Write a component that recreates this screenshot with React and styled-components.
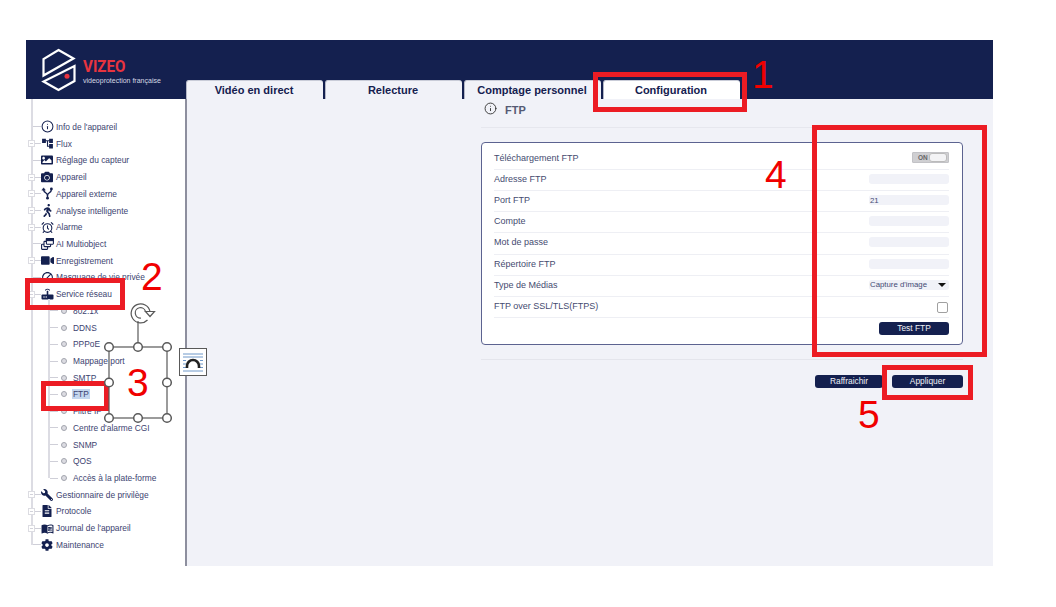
import React from "react";
import styled, { createGlobalStyle } from "styled-components";
import { Info, AlarmClock } from "lucide-react";
import { FaCamera, FaImage, FaWalking, FaVideo, FaWrench, FaFileAlt, FaCog } from "react-icons/fa";
import { MdAccountTree, MdMenuBook, MdOutlineBlock } from "react-icons/md";

const Global = createGlobalStyle`
  html, body { margin: 0; padding: 0; background: #fff; }
  body { font-family: "Liberation Sans", Arial, sans-serif; width: 1056px; height: 607px; overflow: hidden; }
  * { box-sizing: border-box; }
`;

const NAVY = "#14204f";
const ROW = 16.72;

const Page = styled.div`position: relative; width: 1056px; height: 607px; padding: 40px 63px 41px 26px;`;
const Frame = styled.div`width: 967px; height: 526px; display: flex; flex-direction: column;`;
const Header = styled.header`height: 59px; background: ${NAVY}; display: flex; align-items: flex-end; flex: none;`;
const Brand = styled.div`width: 160px; height: 59px; flex: none; display: flex; align-items: flex-start; padding: 8px 0 0 14px; gap: 5px;`;
const BrandText = styled.div`display: flex; flex-direction: column; padding-top: 10px;`;
const BrandName = styled.span`font-family: "Roboto", sans-serif; font-weight: 700; font-size: 17px; line-height: 17px; color: #e8343f; display: inline-block; transform: scaleX(0.89); transform-origin: left center;`;
const BrandSub = styled.span`font-size: 7px; line-height: 9px; color: #d5d8e3; white-space: nowrap; margin-top: 1px;`;
const Tabs = styled.nav`display: flex; gap: 2px;`;
const Tab = styled.div`
  width: 137px; height: 19px; border-radius: 3px 3px 0 0;
  background: ${p => (p.$active ? "#ffffff" : "#f1f2f8")};
  border-top: 1px solid #c9ccd8; border-left: 1px solid #b4b7c6;
  color: ${NAVY}; font-size: 11px; font-weight: 700;
  display: flex; align-items: center; justify-content: center; padding: 0 2px 1px 0;
`;
const Body = styled.div`flex: 1; display: flex; min-height: 0;`;
const Sidebar = styled.aside`width: 161px; flex: none; background: #fff; border-right: 2px solid #8d8f9e; padding-left: 5px;`;
const Tree = styled.div`
  position: relative; padding: 19.6px 0 0 2px; height: 446px;
  &::before { content: ""; position: absolute; left: 0; top: 0; bottom: 0; width: 2px; background: #dcdce3; }
`;
const Row = styled.div`position: relative; height: ${ROW}px; display: flex; align-items: center; white-space: nowrap;`;
const Connector = styled.span`width: ${p => p.$w}px; height: 1px; background: #cfcfd8; flex: none;`;
const Expander = styled.span`
  position: absolute; left: -5px; top: 5px; width: 7px; height: 7px; background: #fff; border: 1px solid #dcdce2;
  &::after { content: ""; position: absolute; left: 1px; top: 2px; width: 3px; height: 1px; background: #d2d2da; }
`;
const IconBox = styled.span`width: 12px; height: 12px; flex: none; display: flex; align-items: center; justify-content: center; color: ${NAVY}; transform: ${p => (p.$flip ? "scaleX(-1)" : "none")}; & > svg { flex: none; }`;
const Label = styled.span`font-size: 8.4px; color: #3c4370; margin-left: ${p => p.$ml ?? 3}px; padding: 0 ${p => (p.$sel ? 1 : 0)}px; background: ${p => (p.$sel ? "#c4d6ee" : "transparent")};`;
const Children = styled.div`
  position: relative; padding-left: 17px;
  &::before { content: ""; position: absolute; left: 15px; top: -4px; height: ${ROW * 10.5 + 4}px; width: 2px; background: #dcdce3; }
`;
const Dot = styled.span`width: 6px; height: 6px; border-radius: 50%; background: #dcdce2; border: 1px solid #a3a5ae; margin: 0 -0.5px 0 2.5px; flex: none;`;

const Content = styled.main`flex: 1; background: #f1f2f8; padding: 0 30px 0 294px; display: flex; flex-direction: column;`;
const Title = styled.div`height: 28px; display: flex; align-items: center; gap: 8px; border-bottom: 1px solid #e6e7ee; color: #555a74; font-size: 11px; font-weight: 700; padding: 0 0 8px 3px; margin-top: 1px; & > svg { margin-top: -3px; }`;
const Panel = styled.section`margin-top: 14px; height: 203px; background: #fff; border: 1px solid #5c6390; border-radius: 4px; padding: 5.6px 13px 0 12px;`;
const FormRow = styled.div`height: 21.2px; display: flex; align-items: center; justify-content: space-between; border-bottom: 1.5px solid #eeeff4; padding-bottom: 2px;`;
const FormLabel = styled.span`font-size: 9px; color: #454b70;`;
const Toggle = styled.span`width: 37px; height: 11px; background: #cfcfd2; border: 1px solid #c2c2c6; display: flex; align-items: center; justify-content: space-between; padding: 0 1px 0 5px; font-size: 6.5px; font-weight: 700; color: #666; border-radius: 1px;`;
const Knob = styled.span`width: 18px; height: 9px; background: #f3f3f5; border-radius: 3px; border: 1px solid #bbb;`;
const Field = styled.div`width: 80px; height: 10px; background: #f1f2f8; border-radius: 3px; display: flex; align-items: center; justify-content: space-between; padding: 0 2px 0 1px; font-size: 7.8px; color: #434a74;`;
const Caret = styled.span`width: 0; height: 0; border-left: 4px solid transparent; border-right: 4px solid transparent; border-top: 4px solid #111; margin-right: 1px;`;
const Check = styled.span`width: 11px; height: 11px; border: 1px solid #a0a0a0; border-radius: 2px; background: #fff; margin-right: 1px; margin-top: 2px;`;
const ButtonRow = styled.div`display: flex; justify-content: flex-end; padding-top: 4.4px;`;
const Button = styled.button`
  width: ${p => p.$w}px; height: 13px; background: ${NAVY}; color: #f0f1f6; border: 0; border-radius: 3px; padding: 0;
  font-family: "Liberation Sans", Arial, sans-serif; font-size: 8.4px; line-height: 13px;
`;
const Divider = styled.div`height: 1px; background: #e4e5ec; margin-top: 14px;`;
const Actions = styled.div`display: flex; justify-content: flex-end; gap: 9px; margin-top: 15px;`;

const Box = styled.div`
  position: absolute; left: ${p => p.$x}px; top: ${p => p.$y}px; width: ${p => p.$w}px; height: ${p => p.$h}px;
  border: 5px solid #ec1c24; pointer-events: none;
`;
const Num = styled.span`position: absolute; left: ${p => p.$x}px; top: ${p => p.$y}px; font-size: 39px; line-height: 1; color: #f00000;`;
const Overlay = styled.svg`position: absolute; left: 100px; top: 300px; width: 120px; height: 130px;`;

const Router = () => (
  <svg width="13" height="12" viewBox="0 0 13 12" fill="none">
    <rect x="0.5" y="6.5" width="12" height="5" rx="1" fill={NAVY} />
    <path d="M6.5 7V2.8" stroke={NAVY} strokeWidth="1.6" />
    <path d="M4 2.4C5.3 0.9 7.7 0.9 9 2.4" stroke={NAVY} strokeWidth="1" />
    <circle cx="3" cy="9" r=".7" fill="#fff" /><circle cx="5.2" cy="9" r=".7" fill="#fff" />
  </svg>
);
const Multi = () => (
  <svg width="13" height="12" viewBox="0 0 13 12" fill="none" stroke={NAVY} strokeWidth="1.1">
    <rect x="0.6" y="6.2" width="6" height="5.2" rx=".6" />
    <rect x="3" y="3.4" width="6.6" height="5.2" rx=".6" fill="#fff" />
    <rect x="5.4" y="0.6" width="7" height="5.6" rx=".6" fill="#fff" />
    <rect x="5.4" y="0.6" width="7" height="2" fill={NAVY} />
  </svg>
);
const UsbFork = () => (
  <svg width="13" height="13" viewBox="0 0 13 13" fill="none" stroke={NAVY} strokeWidth="1.4">
    <path d="M2.6 2.5C2.6 6 6.5 5.5 6.5 8.5V11" />
    <path d="M10.4 2.5C10.4 6 6.5 5.5 6.5 8.5" />
    <path d="M0.8 3.2L2.6 0.8L4.4 3.2Z" fill={NAVY} strokeWidth=".4" />
    <circle cx="10.4" cy="2" r="1.4" fill={NAVY} stroke="none" />
    <circle cx="6.5" cy="11.2" r="1.4" fill={NAVY} stroke="none" />
  </svg>
);
const Logo = () => (
  <svg width="38" height="46" viewBox="40 48.5 38 46" fill="none" stroke="#fff" strokeWidth="2.2" strokeLinejoin="miter">
    <path d="M58.5 50.5L73.5 59L43.5 76V59.5Z" />
    <path d="M74.5 66.5V81.5L58.5 90.5L43.5 82Z" />
    <circle cx="67" cy="76.7" r="2.5" fill="#e8343f" stroke="none" />
  </svg>
);

const top = [
  { t: "Info de l'appareil", i: <Info size={13} strokeWidth={1.9} /> },
  { t: "Flux", x: 1, i: <MdAccountTree size={13} /> },
  { t: "Réglage du capteur", i: <FaImage size={12} /> },
  { t: "Appareil", x: 1, i: <FaCamera size={12} /> },
  { t: "Appareil externe", x: 1, i: <UsbFork /> },
  { t: "Analyse intelligente", x: 1, i: <FaWalking size={13} /> },
  { t: "Alarme", x: 1, i: <AlarmClock size={13} strokeWidth={2} /> },
  { t: "AI Multiobject", i: <Multi /> },
  { t: "Enregistrement", x: 1, i: <FaVideo size={13} /> },
  { t: "Masquage de vie privée", i: <MdOutlineBlock size={13} /> },
  { t: "Service réseau", x: 1, i: <Router /> },
];
const kids = ["802.1x", "DDNS", "PPPoE", "Mappage port", "SMTP", "FTP", "Filtre IP", "Centre d'alarme CGI", "SNMP", "QOS", "Accès à la plate-forme"];
const bottom = [
  { t: "Gestionnaire de privilège", x: 1, flip: 1, i: <FaWrench size={12} /> },
  { t: "Protocole", x: 1, i: <FaFileAlt size={12} /> },
  { t: "Journal de l'appareil", x: 1, i: <MdMenuBook size={13} /> },
  { t: "Maintenance", i: <FaCog size={12} /> },
];

const TopRow = ({ t, x, i, flip }) => (
  <Row>
    <Connector $w={8} />
    {x ? <Expander /> : null}
    <IconBox $flip={flip}>{i}</IconBox>
    <Label>{t}</Label>
  </Row>
);

const fields = [
  ["Téléchargement FTP", <Toggle key="t">ON<Knob /></Toggle>],
  ["Adresse FTP", <Field key="a" />],
  ["Port FTP", <Field key="p">21</Field>],
  ["Compte", <Field key="c" />],
  ["Mot de passe", <Field key="m" />],
  ["Répertoire FTP", <Field key="r" />],
  ["Type de Médias", <Field key="s">Capture d'image<Caret /></Field>],
  ["FTP over SSL/TLS(FTPS)", <Check key="k" />],
];

const handles = [[109, 347], [138, 347], [167, 347], [109, 382.5], [167, 382.5], [109, 418], [138, 418], [167, 418]];
const RING = "M150 311.5A9.5 9.5 0 1 0 147.5 320";
const INNER = "M145.5 311.5A5.2 5.2 0 1 0 141 318";

export default function App() {
  return (
    <Page>
      <Global />
      <Frame>
        <Header>
          <Brand>
            <Logo />
            <BrandText>
              <BrandName>VIZEO</BrandName>
              <BrandSub>videoprotection française</BrandSub>
            </BrandText>
          </Brand>
          <Tabs>
            <Tab>Vidéo en direct</Tab>
            <Tab>Relecture</Tab>
            <Tab>Comptage personnel</Tab>
            <Tab $active>Configuration</Tab>
          </Tabs>
        </Header>
        <Body>
          <Sidebar>
            <Tree>
              {top.map(r => <TopRow key={r.t} {...r} />)}
              <Children>
                {kids.map(k => (
                  <Row key={k}>
                    <Connector $w={8} />
                    <Dot />
                    <Label $ml={k === "FTP" ? 6 : 7} $sel={k === "FTP"}>{k}</Label>
                  </Row>
                ))}
              </Children>
              {bottom.map(r => <TopRow key={r.t} {...r} />)}
            </Tree>
          </Sidebar>
          <Content>
            <Title><Info size={13} strokeWidth={1.7} color="#333" />FTP</Title>
            <Panel>
              {fields.map(([l, c]) => (
                <FormRow key={l}><FormLabel>{l}</FormLabel>{c}</FormRow>
              ))}
              <ButtonRow><Button $w={70}>Test FTP</Button></ButtonRow>
            </Panel>
            <Divider />
            <Actions>
              <Button $w={68}>Raffraichir</Button>
              <Button $w={71}>Appliquer</Button>
            </Actions>
          </Content>
        </Body>
      </Frame>

      <Box $x={593} $y={72} $w={154} $h={40} />
      <Box $x={25} $y={278} $w={100} $h={32} />
      <Box $x={41} $y={381} $w={68} $h={30} />
      <Box $x={812} $y={125} $w={175} $h={232} />
      <Box $x={882} $y={365} $w={91} $h={35} />
      <Num $x={752} $y={55}>1</Num>
      <Num $x={141} $y={257}>2</Num>
      <Num $x={127} $y={363}>3</Num>
      <Num $x={765} $y={155}>4</Num>
      <Num $x={858} $y={395}>5</Num>

      <Overlay viewBox="100 300 120 130" fill="none">
        <path d="M138 347V321" stroke="#595959" strokeWidth="1.2" />
        <rect x="109" y="347" width="58" height="71" stroke="#595959" strokeWidth="1.2" />
        <path d={RING} stroke="#595959" strokeWidth="1.2" />
        <path d={INNER} stroke="#595959" strokeWidth="1.2" />
        <path d="M145.5 311.5H154.5L150 316.5Z" fill="#fff" stroke="#595959" strokeWidth="1.2" />
        {handles.map(([x, y]) => (
          <circle key={`${x}-${y}`} cx={x} cy={y} r="4.3" fill="#fff" stroke="#595959" strokeWidth="1.5" />
        ))}
        <rect x="179.5" y="348.5" width="27" height="27" fill="#fff" stroke="#595959" />
        <path d="M183 354H203M183 357H203M183 360.5H186M200 360.5H203M183 364H186M200 364H203M183 367.5H186M200 367.5H203M183 371H203" stroke="#4a7ebb" strokeWidth=".8" />
        <path d="M187 368V366A6 6 0 0 1 199 366V368" stroke="#222" strokeWidth="2.6" />
      </Overlay>
    </Page>
  );
}
